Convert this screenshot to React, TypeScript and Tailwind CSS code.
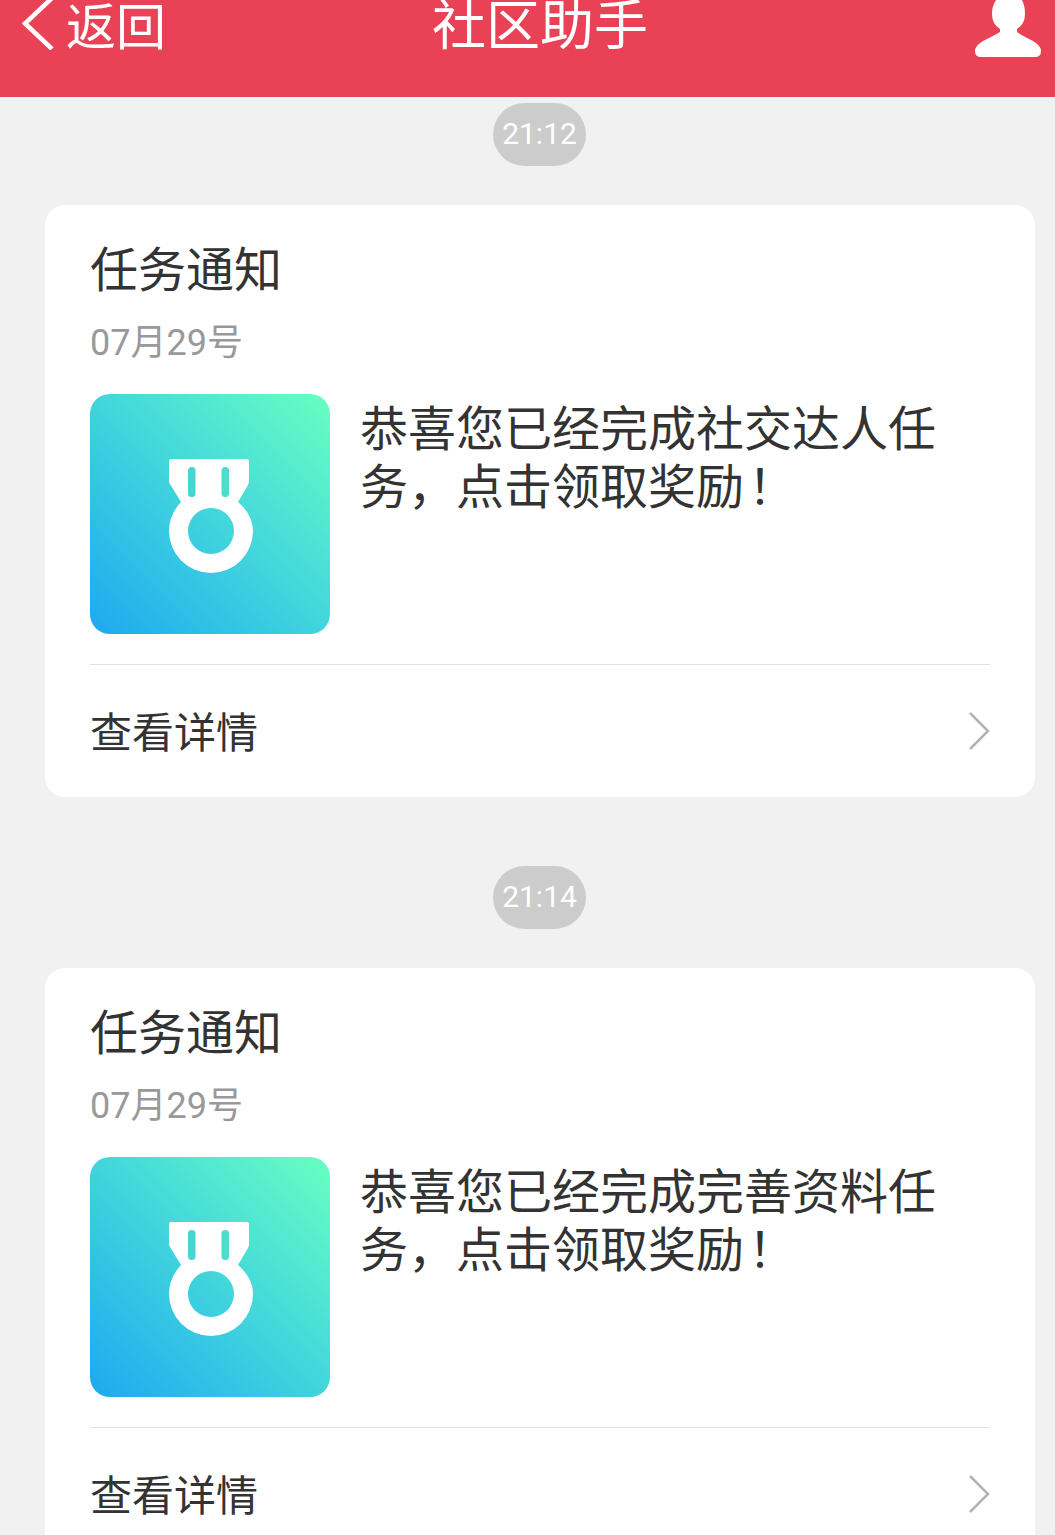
import React from 'react';

const FONT = "font-['Roboto','Noto_Sans_CJK_SC',sans-serif]";

type Notice = {
  time: string;
  date: string;
  message: string;
};

const notices: Notice[] = [
  { time: '21:12', date: '07月29号', message: '恭喜您已经完成社交达人任务，点击领取奖励' },
  { time: '21:14', date: '07月29号', message: '恭喜您已经完成完善资料任务，点击领取奖励' },
];

function MedalIcon() {
  return (
    <svg className="ml-[2px] mt-[4px]" width="84" height="114" viewBox="0 0 84 114" fill="none">
      <path
        fillRule="evenodd"
        fill="#fff"
        d="M2 0H78Q80 0 80 2V22Q80 24 79 26L69 43Q84 56 84 72A42 42 0 0 1 0 72Q0 56 12 43L1 25Q0 24 0 22V2Q0 0 2 0ZM42 49A23 23 0 1 0 42 95A23 23 0 1 0 42 49Z"
      />
      <rect x="19" y="8" width="7.5" height="30" rx="3.5" fill="#45d8d3" />
      <rect x="52.5" y="8" width="7.5" height="30" rx="3.5" fill="#4fdccd" />
    </svg>
  );
}

function NoticeCard({ notice }: { notice: Notice }) {
  return (
    <>
      {/* Time pill */}
      <div className="flex justify-center pl-[24px]">
        <div className="w-[93px] h-[63px] pb-[2px] rounded-full bg-[#cccccc] text-white text-[30px] flex items-center justify-center">
          {notice.time}
        </div>
      </div>

      {/* Card */}
      <div className="mt-[39px] ml-[45px] mr-[20px] bg-white rounded-[20px] px-[45px]">
        <div className="pt-[36px] text-[48px] leading-[60px] text-[#333333]">任务通知</div>
        <div className="mt-[18px] text-[36px] leading-[48px] text-[#999999]">{notice.date}</div>
        <div className="mt-[27px] flex gap-[30px]">
          <div className="w-[240px] h-[240px] shrink-0 rounded-[20px] bg-gradient-to-tr from-[#1fa8f0] to-[#68ffc0] flex items-center justify-center">
            <MedalIcon />
          </div>
          <div className="w-[590px] text-[48px] leading-[58px] text-[#333333] pt-[7px]">
            {notice.message}<span className="ml-[4px]">！</span>
          </div>
        </div>
        <div className="mt-[30px] border-t border-[#e0e0e0] h-[133px] flex items-center justify-between">
          <span className="text-[42px] leading-[60px] text-[#333333] mt-[6px]">查看详情</span>
          <svg width="22" height="38" viewBox="0 0 22 38" fill="none" stroke="#b3b3b3" strokeWidth="2.5">
            <path d="M2 1L20 19L2 37" />
          </svg>
        </div>
      </div>
    </>
  );
}

export default function App() {
  return (
    <div className={`w-[1055px] h-[1535px] overflow-hidden bg-[#f1f1f1] ${FONT}`}>
      {/* Header */}
      <div className="h-[97px] bg-[#e94155] text-white flex items-start overflow-hidden">
        <div className="flex-1 flex items-start pl-[22px]">
          <svg className="-mt-[2px]" width="32" height="52" viewBox="0 0 32 52" fill="none" stroke="#fff" strokeWidth="4.5">
            <path d="M30 0L3 25.5L30 51" />
          </svg>
          <span className="ml-[12px] -mt-[7px] text-[50px] leading-[70px]">返回</span>
        </div>
        <div className="ml-[17px] -mt-[8px] text-[54px] leading-[70px]">社区助手</div>
        <div className="flex-1 flex justify-end pr-[14px]">
          <svg width="66" height="58" viewBox="0 0 66 58" fill="#fff">
            <path d="M21 0H47Q50 6 50 14Q50 24 42 29V32Q44 34 58 41Q66 46 66 51Q66 57 60 57H6Q0 57 0 51Q0 46 8 41Q22 34 25 32V29Q17 24 17 14Q17 6 21 0Z" />
          </svg>
        </div>
      </div>

      {/* Messages */}
      <div className="pt-[6px] flex flex-col">
        {notices.map((notice, i) => (
          <div key={notice.time} className={i > 0 ? 'mt-[69px]' : ''}>
            <NoticeCard notice={notice} />
          </div>
        ))}
      </div>
    </div>
  );
}
